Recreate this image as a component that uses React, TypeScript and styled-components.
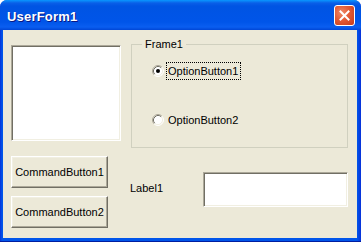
import * as React from 'react'
import styled, { createGlobalStyle } from 'styled-components'

const GlobalStyle = createGlobalStyle`
  html, body {
    margin: 0;
    padding: 0;
    overflow: hidden;
    background: #ffffff;
  }
`

const Window = styled.div`
  width: 361px;
  height: 242px;
  display: flex;
  flex-direction: column;
  border-radius: 7px 7px 0 0;
  background: linear-gradient(to right, #0831d9 0px, #0055ea 2px, #0055ea 357px, #0831d9 361px);
  box-shadow: inset 0 -1px 0 #001ea0;
  overflow: hidden;
`

const TitleBar = styled.div`
  height: 30px;
  flex: none;
  display: flex;
  align-items: center;
  justify-content: space-between;
  padding: 0 6px 0 7px;
  box-sizing: border-box;
  background: linear-gradient(
    to bottom,
    #0997ff 0px,
    #0a5fe8 3px,
    #0054e3 6px,
    #0055e9 22px,
    #0a5ef0 27px,
    #0046d6 30px
  );
`

const Title = styled.span`
  font-family: "Liberation Sans", Arial, sans-serif;
  font-weight: bold;
  font-size: 13px;
  letter-spacing: 0.2px;
  color: #ffffff;
  text-shadow: 1px 1px 0 #0a1883;
  margin-top: 2px;
`

const CloseButton = styled.div`
  width: 21px;
  height: 21px;
  box-sizing: border-box;
  border: 1px solid #ffffff;
  border-radius: 3px;
  background: radial-gradient(circle at 35% 35%, #f08a68 0%, #e35a35 45%, #c43a1a 100%);
  display: flex;
  align-items: center;
  justify-content: center;
  margin-top: 1px;
`

const Client = styled.div`
  flex: 1;
  margin: 0 4px 4px 3px;
  background: #ece9d8;
  padding: 15px 0 0 8px;
  box-sizing: border-box;
  display: flex;
  flex-direction: column;
  font-family: "Liberation Sans", Arial, sans-serif;
  font-size: 11px;
  color: #000000;
`

const TopRow = styled.div`
  display: flex;
  align-items: flex-start;
  gap: 10px;
`

const BottomRow = styled.div`
  display: flex;
  align-items: flex-start;
  margin-top: 8px;
`

const Sunken = styled.div<{ $w: number; $h: number }>`
  width: ${p => p.$w}px;
  height: ${p => p.$h}px;
  box-sizing: border-box;
  background: #ffffff;
  border: 1px solid;
  border-color: #aca899 #ffffff #ffffff #aca899;
  box-shadow: inset 1px 1px 0 #716f64, inset -1px -1px 0 #f1efe2;
`

const Frame = styled.div`
  position: relative;
  width: 217px;
  height: 104px;
  margin-top: -1px;
  box-sizing: border-box;
  border: 1px solid #d0d0bf;
  padding: 17px 0 0 20px;
  display: flex;
  flex-direction: column;
  gap: 31px;
`

const Legend = styled.span`
  position: absolute;
  top: -7px;
  left: 10px;
  padding: 0 3px;
  background: #ece9d8;
  line-height: 13px;
`

const Option = styled.div`
  display: flex;
  align-items: center;
  height: 18px;
  gap: 2px;
`

const OptionText = styled.span<{ $focus?: boolean }>`
  padding: 2px 2px 2px 1px;
  border: 1px dotted ${p => (p.$focus ? '#000000' : 'transparent')};
  line-height: 12px;
`

const ButtonColumn = styled.div`
  display: flex;
  flex-direction: column;
  gap: 8px;
`

const Button = styled.div`
  width: 97px;
  height: 32px;
  box-sizing: border-box;
  display: flex;
  align-items: center;
  justify-content: center;
  border: 1px solid;
  border-color: #ffffff #716f64 #716f64 #ffffff;
  box-shadow: inset -1px -1px 0 #aca899, inset 1px 1px 0 #f1efe2;
  background: #ece9d8;
`

const LabelRow = styled.div`
  display: flex;
  align-items: center;
  margin-top: 16px;
`

const Label = styled.span`
  width: 73px;
  padding-left: 22px;
  margin-bottom: 4px;
`

const Radio = ({ checked }: { checked?: boolean }) => (
  <svg width="12" height="12" viewBox="0 0 12 12">
    <circle cx="6" cy="6" r="5" fill="#ffffff" />
    <path d="M2.11 9.89 A5.5 5.5 0 0 1 9.89 2.11" fill="none" stroke="#aca899" />
    <path d="M2.82 9.18 A4.5 4.5 0 0 1 9.18 2.82" fill="none" stroke="#716f64" />
    <path d="M9.89 2.11 A5.5 5.5 0 0 1 2.11 9.89" fill="none" stroke="#ffffff" />
    <path d="M9.18 2.82 A4.5 4.5 0 0 1 2.82 9.18" fill="none" stroke="#f1efe2" />
    {checked && <circle cx="6" cy="6" r="2" fill="#000000" />}
  </svg>
)

const CloseIcon = () => (
  <svg width="11" height="11" viewBox="0 0 11 11">
    <path d="M1.5 1.5 L9.5 9.5 M9.5 1.5 L1.5 9.5" stroke="#ffffff" strokeWidth="2" strokeLinecap="square" />
  </svg>
)

export default function App() {
  return (
    <>
      <GlobalStyle />
      <Window>
        <TitleBar>
          <Title>UserForm1</Title>
          <CloseButton><CloseIcon /></CloseButton>
        </TitleBar>
        <Client>
          <TopRow>
            <Sunken $w={110} $h={96} />
            <Frame>
              <Legend>Frame1</Legend>
              <Option>
                <Radio checked />
                <OptionText $focus>OptionButton1</OptionText>
              </Option>
              <Option>
                <Radio />
                <OptionText>OptionButton2</OptionText>
              </Option>
            </Frame>
          </TopRow>
          <BottomRow>
            <ButtonColumn>
              <Button>CommandButton1</Button>
              <Button>CommandButton2</Button>
            </ButtonColumn>
            <LabelRow>
              <Label>Label1</Label>
              <Sunken $w={145} $h={35} />
            </LabelRow>
          </BottomRow>
        </Client>
      </Window>
    </>
  )
}
